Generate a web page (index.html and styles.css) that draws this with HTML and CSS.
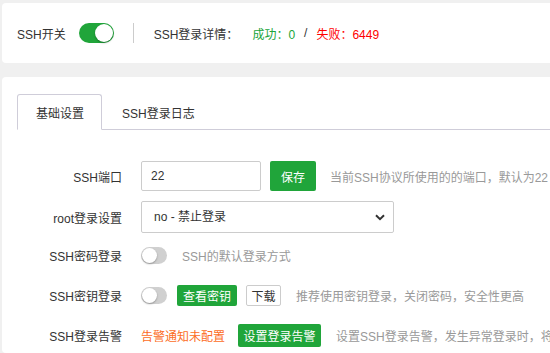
FILE: index.html
```
<!doctype html>
<html lang="zh-CN">
<head>
    <meta charset="utf-8">
    <link rel="stylesheet" href="styles.css">
    <title>SSH管理</title>
</head>
<body>
<div class="card top-bar">
    <span class="top-label">SSH开关</span>
    <span class="switch switch-big on"><i></i></span>
    <span class="divider"></span>
    <span class="top-label">SSH登录详情：</span>
    <span class="stat ok">成功：0</span>
    <span class="slash">/</span>
    <span class="stat fail">失败：6449</span>
</div>
<div class="card main">
    <div class="tabs">
        <span class="tab active">基础设置</span>
        <span class="tab">SSH登录日志</span>
    </div>
    <form class="form">
        <div class="row row-port">
            <label class="row-label">SSH端口</label>
            <input class="input" type="text" value="22">
            <button type="button" class="btn btn-green btn-save">保存</button>
            <span class="hint">当前SSH协议所使用的的端口，默认为22</span>
        </div>
        <div class="row row-root">
            <label class="row-label">root登录设置</label>
            <span class="select-wrap">
                <select class="select">
                    <option>no - 禁止登录</option>
                    <option>yes - 允许登录</option>
                </select>
                <svg class="chevron" width="10" height="7" viewBox="0 0 10 7"><path d="M1 1.2 5 5.2 9 1.2" fill="none" stroke="#333" stroke-width="2"/></svg>
            </span>
        </div>
        <div class="row">
            <label class="row-label">SSH密码登录</label>
            <span class="switch"><i></i></span>
            <span class="hint">SSH的默认登录方式</span>
        </div>
        <div class="row">
            <label class="row-label">SSH密钥登录</label>
            <span class="switch"><i></i></span>
            <button type="button" class="btn btn-green btn-small btn-key">查看密钥</button>
            <button type="button" class="btn btn-white btn-small btn-down">下载</button>
            <span class="hint">推荐使用密钥登录，关闭密码，安全性更高</span>
        </div>
        <div class="row">
            <label class="row-label">SSH登录告警</label>
            <span class="warn">告警通知未配置</span>
            <button type="button" class="btn btn-green btn-alarm">设置登录告警</button>
            <span class="hint">设置SSH登录告警，发生异常登录时，将通过告警通知您</span>
        </div>
    </form>
</div>
</body>
</html>
```

FILE: styles.css
```
html, body {
    margin: 0;
    background-color: #f0f0f0;
    font-family: "Liberation Sans", "Noto Sans CJK SC", sans-serif;
    font-size: 12px;
    color: #333;
    overflow: hidden;
}

* {
    box-sizing: border-box;
}

.card {
    background-color: #fff;
    margin-left: 2px;
    border-radius: 4px 0 0 4px;
}

/* top status bar */

.top-bar {
    margin-top: 3px;
    height: 60px;
    display: flex;
    align-items: center;
    padding-left: 15px;
    white-space: nowrap;
}

.divider {
    width: 1px;
    height: 20px;
    background-color: #ccc;
    margin: 0 20px 0 19px;
}

.stat.ok {
    color: #20a53a;
    margin-left: 14px;
}

.slash {
    margin: 0 9px;
}

.stat.fail {
    color: #f00;
}

/* switches */

.switch {
    position: relative;
    display: inline-block;
    width: 26px;
    height: 17px;
    border-radius: 9px;
    background-color: #d0d0d0;
    flex-shrink: 0;
}

.switch i {
    position: absolute;
    top: 1px;
    left: 1px;
    width: 15px;
    height: 15px;
    border-radius: 50%;
    background-color: #fff;
    box-shadow: 0 1px 2px rgba(0, 0, 0, 0.3);
}

.switch-big {
    width: 35px;
    height: 20px;
    border-radius: 10px;
    margin-left: 13px;
}

.switch-big i {
    width: 18px;
    height: 18px;
}

.switch.on {
    background-color: #20a53a;
}

.switch.on i {
    left: auto;
    right: 1px;
}

/* main card */

.main {
    margin-top: 14px;
    height: 276px;
    padding: 17px 0 0 15px;
    overflow: hidden;
}

.tabs {
    display: flex;
    height: 36px;
    border-bottom: 1px solid #cfcdd9;
    white-space: nowrap;
}

.tab {
    display: flex;
    align-items: center;
    padding: 0 20px;
    height: 36px;
    font-size: 12px;
    color: #333;
}

.tab.active {
    width: 85px;
    padding: 0 0 0 18px;
    border: 1px solid #cfcdd9;
    border-bottom-color: #fff;
    border-radius: 3px 3px 0 0;
    background-color: #fff;
    margin-bottom: -1px;
    height: 36px;
}

/* form */

.form {
    margin-top: 31px;
    white-space: nowrap;
}

.row {
    display: flex;
    align-items: center;
    height: 32px;
    margin-bottom: 8px;
}

.row-port {
    height: 30px;
    margin-bottom: 10px;
}

.row-root {
    margin-bottom: 6px;
}

.row-label {
    width: 105px;
    margin-right: 19px;
    text-align: right;
    flex-shrink: 0;
}

.input {
    width: 120px;
    height: 30px;
    border: 1px solid #ccc;
    border-radius: 2px;
    padding: 0 9px;
    font-family: inherit;
    font-size: 12px;
    color: #333;
}

.select-wrap {
    position: relative;
    display: inline-block;
}

.select {
    width: 253px;
    height: 32px;
    border: 1px solid #ccc;
    border-radius: 2px;
    padding: 0 12px;
    font-family: inherit;
    font-size: 12px;
    color: #333;
    background-color: #fff;
    appearance: none;
    -webkit-appearance: none;
}

.chevron {
    position: absolute;
    right: 9px;
    top: 13px;
}

.btn {
    border: none;
    border-radius: 2px;
    font-family: inherit;
    font-size: 12px;
    padding: 0;
    flex-shrink: 0;
}

.btn-green {
    background-color: #20a53a;
    color: #fff;
}

.btn-white {
    background-color: #fff;
    color: #333;
    border: 1px solid #ccc;
}

.btn-save {
    width: 46px;
    height: 30px;
    margin-left: 9px;
}

.btn-small {
    height: 21px;
}

.btn-key {
    width: 60px;
    margin-left: 10px;
}

.btn-down {
    width: 35px;
    margin-left: 9px;
}

.btn-alarm {
    width: 83px;
    height: 23px;
    margin-left: 13px;
}

.warn {
    color: #fc6d26;
}

.hint {
    color: #999;
    margin-left: 15px;
}

.row-port .hint {
    margin-left: 14px;
}
```
